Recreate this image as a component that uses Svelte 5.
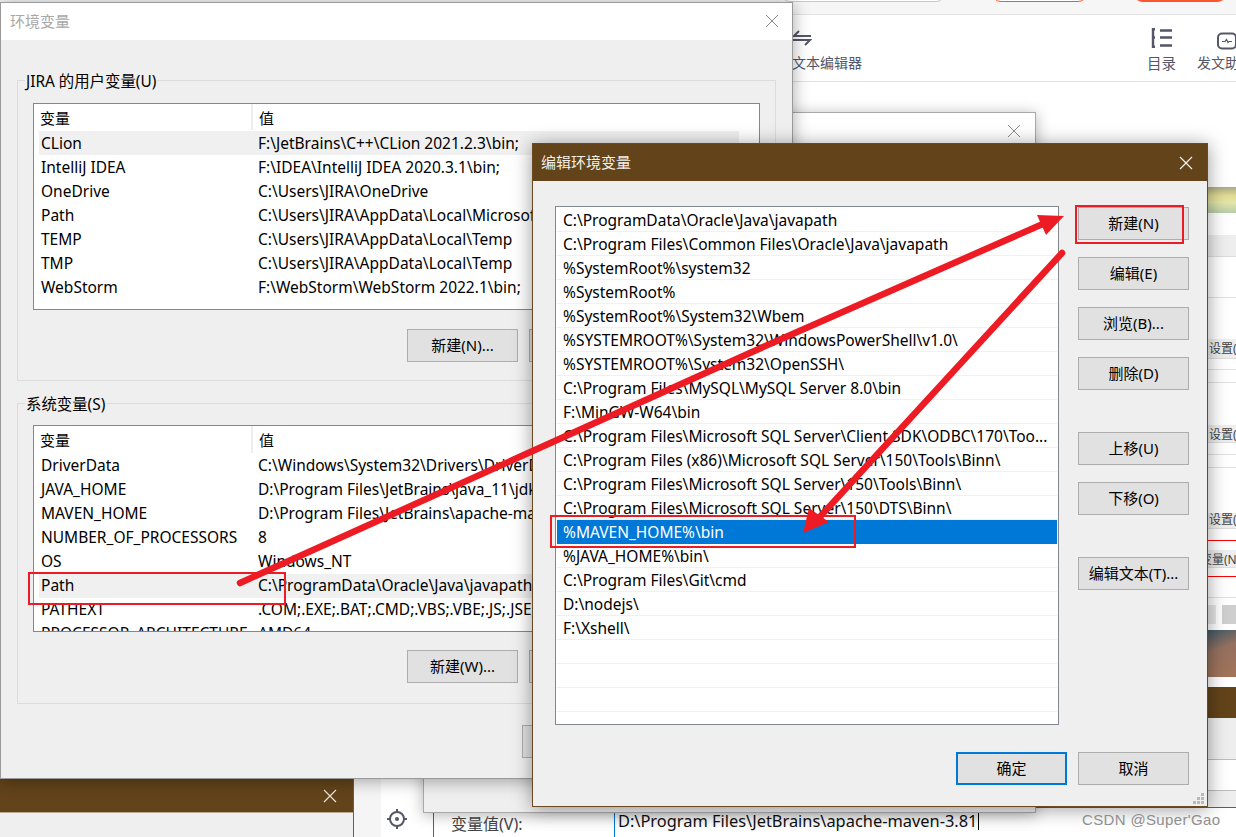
<script>
  const userVars = [
    ['CLion', 'F:\\JetBrains\\C++\\CLion 2021.2.3\\bin;'],
    ['IntelliJ IDEA', 'F:\\IDEA\\IntelliJ IDEA 2020.3.1\\bin;'],
    ['OneDrive', 'C:\\Users\\JIRA\\OneDrive'],
    ['Path', 'C:\\Users\\JIRA\\AppData\\Local\\Microsoft\\WindowsApps;'],
    ['TEMP', 'C:\\Users\\JIRA\\AppData\\Local\\Temp'],
    ['TMP', 'C:\\Users\\JIRA\\AppData\\Local\\Temp'],
    ['WebStorm', 'F:\\WebStorm\\WebStorm 2022.1\\bin;']
  ];
  const sysVars = [
    ['DriverData', 'C:\\Windows\\System32\\Drivers\\DriverData'],
    ['JAVA_HOME', 'D:\\Program Files\\JetBrains\\java_11\\jdk-11'],
    ['MAVEN_HOME', 'D:\\Program Files\\JetBrains\\apache-maven-3.8.1'],
    ['NUMBER_OF_PROCESSORS', '8'],
    ['OS', 'Windows_NT'],
    ['Path', 'C:\\ProgramData\\Oracle\\Java\\javapath;C:\\Program Files'],
    ['PATHEXT', '.COM;.EXE;.BAT;.CMD;.VBS;.VBE;.JS;.JSE;.WSF'],
    ['PROCESSOR_ARCHITECTURE', 'AMD64']
  ];
  const paths = [
    'C:\\ProgramData\\Oracle\\Java\\javapath',
    'C:\\Program Files\\Common Files\\Oracle\\Java\\javapath',
    '%SystemRoot%\\system32',
    '%SystemRoot%',
    '%SystemRoot%\\System32\\Wbem',
    '%SYSTEMROOT%\\System32\\WindowsPowerShell\\v1.0\\',
    '%SYSTEMROOT%\\System32\\OpenSSH\\',
    'C:\\Program Files\\MySQL\\MySQL Server 8.0\\bin',
    'F:\\MinGW-W64\\bin',
    'C:\\Program Files\\Microsoft SQL Server\\Client SDK\\ODBC\\170\\Too...',
    'C:\\Program Files (x86)\\Microsoft SQL Server\\150\\Tools\\Binn\\',
    'C:\\Program Files\\Microsoft SQL Server\\150\\Tools\\Binn\\',
    'C:\\Program Files\\Microsoft SQL Server\\150\\DTS\\Binn\\',
    '%MAVEN_HOME%\\bin',
    '%JAVA_HOME%\\bin\\',
    'C:\\Program Files\\Git\\cmd',
    'D:\\nodejs\\',
    'F:\\Xshell\\',
    '', '', ''
  ];
</script>

<div class="page">
  <header class="topbar">
    <div class="pill search"></div>
    <div class="pill outline"></div>
    <div class="pill solid"></div>
  </header>
  <div class="toolbar">
    <div class="tool editor">
      <svg width="20" height="16" viewBox="0 0 20 16" fill="none" stroke="#555666" stroke-width="2"><path d="M7 1 2 6h17M1 10h17l-5 5"/></svg>
      <span>文本编辑器</span>
    </div>
    <div class="tool toc">
      <svg width="22" height="20" viewBox="0 0 22 20" fill="none" stroke="#555666" stroke-width="2.400"><path d="M4 1.200H2v17.600h2M2 9.500h2M9 2.500h12M9 9.500h12M9 17.500h12"/></svg>
      <span>目录</span>
    </div>
    <div class="tool help">
      <svg width="20" height="17" viewBox="0 0 20 17" fill="none" stroke="#555666" stroke-width="2"><rect x="1" y="1" width="18" height="15" rx="4"/><path d="M5 9h3l1.500-2 1.500 3 1-1h3" stroke-width="1.200"/></svg>
      <span>发文助手</span>
    </div>
  </div>

  <div class="side-strip">
    <div class="painting"></div>
    <div class="band top"></div>
    <div class="rule r1"></div>
    <div class="band b1">设置(S)</div>
    <div class="rule r2"></div>
    <div class="rule r3"></div>
    <div class="band b2">设置(E)</div>
    <div class="rule r4"></div>
    <div class="rule r5"></div>
    <div class="band b3">设置(T)</div>
    <div class="red r6"></div>
    <div class="band b4">变量(N)...</div>
    <div class="red r7"></div>
    <div class="rule r8"></div>
    <div class="blocks"><i></i><b></b></div>
    <div class="photo"></div>
    <div class="brown"></div>
    <div class="grey g1"></div>
    <div class="white"></div>
    <div class="grey g2"></div>
  </div>

  <div class="form-win">
    <label class="form-label" for="var-value">变量值(V):</label>
    <div class="form-input" id="var-value">D:\Program Files\JetBrains\apache-maven-3.81<span class="caret"></span></div>
  </div>
  <div class="gutter"></div>
  <svg class="target" width="20" height="20" viewBox="0 0 20 20" fill="none" stroke="#555666" stroke-width="2"><circle cx="10" cy="10" r="7"/><circle cx="10" cy="10" r="2" fill="#555666" stroke="none"/><path d="M10 0v4M10 16v4M0 10h4M16 10h4"/></svg>

  <section class="win-mid">
    <div class="mid-title"><svg class="x" width="14" height="14" viewBox="0 0 14 14" stroke="#8a8a8a" fill="none"><path d="M1 1l12 12M13 1 1 13"/></svg></div>
  </section>

  <section class="win-behind">
    <div class="behind-title"><svg width="14" height="14" viewBox="0 0 14 14" stroke="#e8e2d8" stroke-width="1.200" fill="none"><path d="M1 1l12 12M13 1 1 13"/></svg></div>
    <div class="behind-body"></div>
  </section>

  <section class="win-env">
    <div class="env-title">
      <span>环境变量</span>
      <svg width="14" height="14" viewBox="0 0 14 14" stroke="#8a8a8a" fill="none"><path d="M1 1l12 12M13 1 1 13"/></svg>
    </div>
    <div class="env-body">
      <div class="group first">
        <span class="legend">JIRA 的用户变量(U)</span>
        <div class="table">
          <div class="thead"><span>变量</span><span class="col2">值</span></div>
          {#each userVars as [k, v], i}
            <div class="row" class:hot={i === 0}><span>{k}</span><span class="val">{v}</span></div>
          {/each}
        </div>
        <div class="actions"><button>新建(N)...</button><button aria-label="编辑"></button></div>
      </div>
      <div class="group second">
        <span class="legend">系统变量(S)</span>
        <div class="table">
          <div class="thead tall"><span>变量</span><span class="col2">值</span></div>
          {#each sysVars as [k, v], i}
            <div class="row" class:hot={i === 5}><span>{k}</span><span class="val">{v}</span></div>
          {/each}
        </div>
        <div class="actions"><button>新建(W)...</button><button aria-label="编辑"></button></div>
      </div>
      <div class="env-foot"><button aria-label="确定"></button></div>
    </div>
  </section>

  <section class="win-edit">
    <div class="edit-title">
      <span>编辑环境变量</span>
      <svg width="14" height="14" viewBox="0 0 14 14" stroke="#f5f2ec" stroke-width="1.200" fill="none"><path d="M1 1l12 12M13 1 1 13"/></svg>
    </div>
    <div class="edit-body">
      <div class="edit-main">
        <div class="listbox">
          {#each paths as p, i}
            <div class="item" class:sel={i === 13}>{p}</div>
          {/each}
        </div>
        <div class="btns">
          <button>新建(N)</button>
          <button>编辑(E)</button>
          <button>浏览(B)...</button>
          <button>删除(D)</button>
          <button class="sep">上移(U)</button>
          <button>下移(O)</button>
          <button class="sep">编辑文本(T)...</button>
        </div>
      </div>
      <div class="edit-foot">
        <button class="primary">确定</button>
        <button>取消</button>
      </div>
    </div>
    <svg class="grip" width="11" height="11" viewBox="0 0 11 11" fill="#b9b9b9"><rect x="8" y="0" width="3" height="3"/><rect x="4" y="4" width="3" height="3"/><rect x="8" y="4" width="3" height="3"/><rect x="0" y="8" width="3" height="3"/><rect x="4" y="8" width="3" height="3"/><rect x="8" y="8" width="3" height="3"/></svg>
  </section>

  <svg class="marks" width="1236" height="837" viewBox="0 0 1236 837" fill="none">
    <rect x="29" y="573" width="256" height="31" stroke="#ed1c24" stroke-width="2"/>
    <rect x="551" y="516" width="304" height="31" stroke="#ed1c24" stroke-width="2"/>
    <rect x="1076" y="206" width="107" height="37" stroke="#ed1c24" stroke-width="2"/>
    <path d="M240 583 771 343.500 1045 223" stroke="#ed1c24" stroke-width="6.500" stroke-linecap="round" stroke-linejoin="round"/>
    <path d="M1064 216 1037 215 1046 235Z" fill="#ed1c24"/>
    <path d="M1062 253 817 520" stroke="#ed1c24" stroke-width="6.500" stroke-linecap="round"/>
    <path d="M803 533 809 508 829 522Z" fill="#ed1c24"/>
  </svg>

  <div class="watermark">CSDN @Super'Gao</div>
</div>

<style>
  :global(body) { margin: 0; background: #fff; }
  .page {
    position: relative;
    width: 1236px;
    height: 837px;
    overflow: hidden;
    background: #fff;
    font-family: "Noto Sans", "Noto Sans CJK SC", sans-serif;
    font-size: 15px;
    color: #000;
  }
  button {
    font: inherit;
    color: #000;
    background: #e1e1e1;
    border: 1px solid #adadad;
    padding: 0 0 2px;
    white-space: nowrap;
  }

  .topbar { position: relative; height: 14px; background: #f6f6f6; border-bottom: 1px solid #e2e2e2; overflow: hidden; }
  .pill { position: absolute; top: -20px; height: 22px; border-radius: 10px; box-sizing: border-box; }
  .search { left: 780px; width: 166px; background: #fff; border: 1px solid #c8c8c8; }
  .outline { left: 991px; width: 97px; background: #fff; border: 1px solid #fc5531; }
  .solid { left: 1133px; width: 94px; background: #fc5531; }
  .toolbar { position: relative; height: 66px; border-bottom: 1px solid #e2e2e2; color: #555666; font-size: 14px; }
  .tool { position: absolute; top: 13px; display: flex; flex-direction: column; white-space: nowrap; }
  .tool span { line-height: 20px; }
  .tool svg { height: 20px; margin-bottom: 5px; }
  .editor { left: 792px; }
  .toc { left: 1147px; align-items: center; }
  .toc span { font-size: 14.500px; }
  .help { left: 1197px; }
  .help span { width: 56px; }
  .help svg { margin: 3px 0 2px 20px; height: 20px; }

  .side-strip { position: absolute; left: 1208px; top: 187px; width: 28px; height: 620px; font-size: 12px; color: #444; white-space: nowrap; overflow: hidden; }
  .side-strip > div { box-sizing: border-box; }
  .painting { height: 26px; background: linear-gradient(180deg, #a9ab84 0, #e3dc92 35%, #e2e5a8 60%, #b6cda9 100%); }
  .band { background: #eee; border-bottom: 1px solid #ddd; padding-left: 1px; line-height: 19px; }
  .rule { height: 1px; background: #e0e0e0; }
  .red { height: 1px; background: #f00; }
  .top { height: 22px; margin-top: 22px; }
  .r1 { margin-top: 40px; }
  .b1 { height: 20px; margin-top: 41px; }
  .r2 { margin-top: 10px; }
  .r3 { margin-top: 12px; }
  .b2 { height: 18px; margin-top: 42px; }
  .r4 { margin-top: 11px; }
  .r5 { margin-top: 12px; }
  .b3 { height: 16px; margin-top: 45px; line-height: 14px; }
  .r6 { margin-top: 11px; }
  .b4 { height: 18px; margin-top: 9px; margin-left: -8px; padding-left: 0; }
  .r7 { margin-top: 8px; }
  .r8 { margin-top: 20px; }
  .blocks { display: flex; gap: 6px; margin-top: 7px; height: 19px; }
  .blocks i { width: 8px; background: #e6e6e6; }
  .blocks b { width: 14px; background: #cfcfcf; }
  .photo { height: 47px; margin-top: 6px; background: linear-gradient(160deg, #3f5a68 0, #94705f 40%, #a47458 100%); }
  .brown { height: 31px; margin-top: 10px; background: #63431a; }
  .g1 { height: 42px; background: #eee; border-bottom: 1px solid #bdbdbd; }
  .white { height: 30px; background: #fff; }
  .g2 { height: 17px; background: #eee; border-top: 1px solid #bdbdbd; }

  .form-win { position: absolute; left: 433px; top: 807px; right: 0; height: 30px; background: #fff; border-left: 1px solid #7a5b35; display: flex; align-items: flex-end; }
  .form-label { width: 163px; padding-left: 17px; font-size: 16px; color: #444; line-height: 26px; flex: none; }
  .form-input { flex: 1; height: 30px; box-sizing: border-box; border: 1px solid #0078d7; border-width: 1px 0 0 1px; padding: 2px 0 0 3px; font-size: 16.400px; line-height: 22px; white-space: nowrap; color: #111; }
  .caret { display: inline-block; width: 1px; height: 18px; background: #000; vertical-align: -3px; margin-left: 1px; }
  .gutter { position: absolute; left: 354px; top: 779px; width: 27px; height: 58px; background: #f5f5f5; }
  .target { position: absolute; left: 387px; top: 809px; }

  .win-mid { position: absolute; left: 423px; top: 112px; width: 611px; height: 699px; background: #efefef; border: 1px solid #a8a8a8; box-shadow: 0 2px 14px rgba(0,0,0,.3); }
  .mid-title { height: 37px; background: #fff; position: relative; }
  .mid-title .x { position: absolute; left: 583px; top: 11px; }

  .win-behind { position: absolute; left: 0; top: 779px; width: 353px; height: 58px; border-right: 1px solid #7a5b35; }
  .behind-title { height: 34px; background: #63431a; display: flex; align-items: center; justify-content: flex-end; padding-right: 16px; border-bottom: 1px solid #b9a88f; box-sizing: border-box; }
  .behind-body { height: 24px; background: #efefef; }

  .win-env { position: absolute; left: 0; top: 2px; width: 791px; height: 775px; background: #efefef; border: 1px solid #9a9a9a; box-shadow: 0 2px 16px rgba(0,0,0,.35); }
  .env-title { height: 37px; background: #fff; display: flex; align-items: center; justify-content: space-between; padding: 0 13px 2px 9px; box-sizing: border-box; color: #a8a8a8; }
  .env-body { padding: 40px 16px 0; }
  .group { position: relative; border: 1px solid #dcdcdc; padding: 22px 15px 0; height: 301px; box-sizing: border-box; }
  .second { margin-top: 22px; padding-top: 21px; }
  .legend { position: absolute; left: 7px; top: -9px; padding: 0 1px; background: #efefef; line-height: 20px; font-size: 15.400px; }
  .table { height: 207px; box-sizing: border-box; background: #fff; border: 1px solid #828790; overflow: hidden; }
  .thead { display: flex; height: 27px; line-height: 29px; margin-left: 6px; overflow: hidden; }
  .thead.tall { height: 28px; }
  .thead span:first-child { width: 211px; border-right: 2px solid #eee; flex: none; margin-bottom: 1px; }
  .col2 { padding-left: 6px; }
  .row { display: grid; grid-template-columns: 217px 274px; height: 24px; line-height: 23px; margin-left: 5px; padding-left: 2px; white-space: nowrap; width: 700px; box-sizing: border-box; font-size: 15.500px; }
  .first .row { line-height: 25px; }
  .hot { background: #f0f0f0; }
  .val { overflow: hidden; }
  .actions { display: flex; gap: 11px; padding: 19px 0 0 374px; }
  .actions button { width: 111px; height: 33px; flex: none; }
  .second .actions { padding-top: 18px; }
  .env-foot { padding: 21px 0 0 505px; }
  .env-foot button { width: 111px; height: 33px; }

  .win-edit { position: absolute; left: 532px; top: 143px; width: 676px; height: 664px; box-sizing: border-box; background: #efefef; border: 1px solid #6b4a20; box-shadow: 0 2px 18px rgba(0,0,0,.4); }
  .edit-title { height: 37px; background: #63431a; color: #f3efe8; display: flex; align-items: center; justify-content: space-between; padding: 0 14px 2px 8px; box-sizing: border-box; }
  .edit-title svg { margin-top: 2px; }
  .edit-body { padding: 25px 18px 0 22px; }
  .edit-main { display: flex; gap: 19px; }
  .listbox { width: 504px; height: 519px; box-sizing: border-box; background: #fff; border: 1px solid #828790; padding: 1px; white-space: nowrap; font-size: 15.500px; }
  .item { height: 24px; line-height: 24px; box-sizing: border-box; padding-left: 6px; border-bottom: 1px solid #f0f0f0; }
  .item.sel { background: #0078d7; color: #fff; border-bottom-color: #0078d7; }
  .btns { display: flex; flex-direction: column; gap: 17px; padding-top: 1px; }
  .btns button { width: 111px; height: 33px; }
  .btns .sep { margin-top: 25px; }
  .edit-foot { display: flex; justify-content: flex-end; gap: 11px; margin-top: 27px; }
  .edit-foot button { width: 111px; height: 33px; }
  .edit-foot .primary { border: 2px solid #0078d7; }
  .grip { position: absolute; right: 3px; bottom: 2px; }

  .marks { position: absolute; left: 0; top: 0; pointer-events: none; }
  .watermark { position: absolute; left: 1082px; top: 810px; font-family: "Liberation Sans", Arial, sans-serif; font-size: 15px; letter-spacing: .35px; color: #8f8f8f; line-height: 20px; white-space: nowrap; }
</style>
